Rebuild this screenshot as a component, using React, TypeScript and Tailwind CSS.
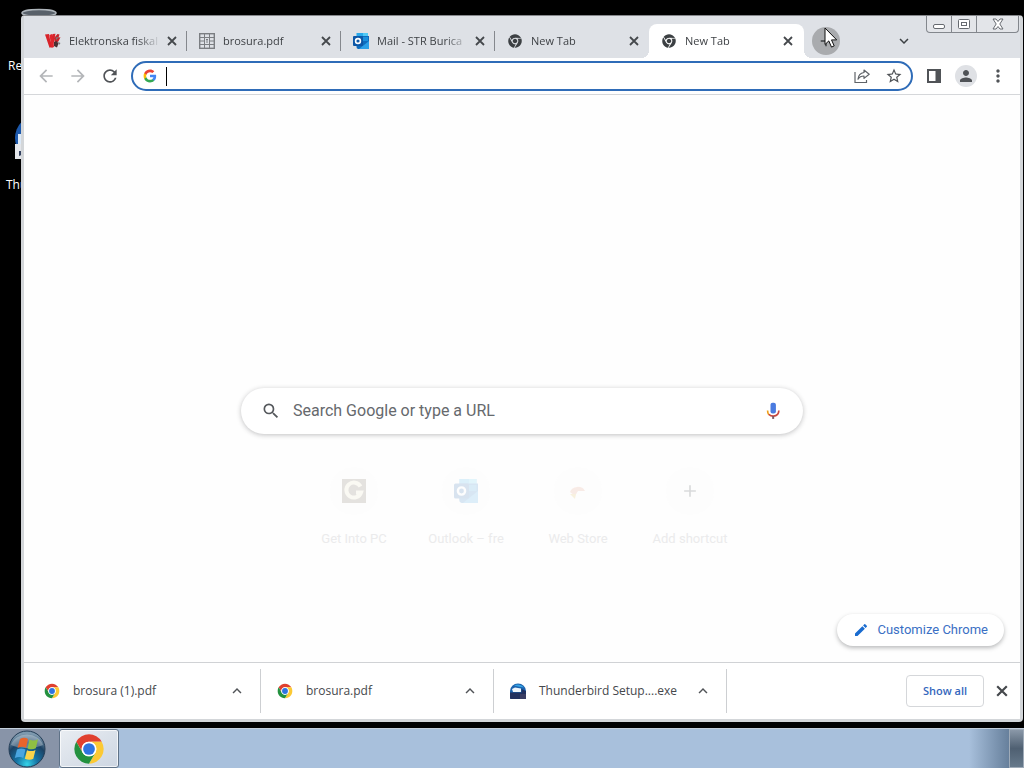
import type { ReactNode } from 'react';
import { FaChrome } from 'react-icons/fa';
import {
  MdAdd,
  MdArrowBack,
  MdArrowForward,
  MdEdit,
  MdExpandLess,
  MdExpandMore,
  MdMoreVert,
  MdPerson,
  MdRefresh,
  MdSearch,
  MdStarBorder,
} from 'react-icons/md';

function ChromeLogo({ className }: { className?: string }) {
  const blade = 'M24 13H43.05A22 22 0 0 0 4.95 13L14.47 29.5A11 11 0 0 1 24 13Z';
  return (
    <svg viewBox="0 0 48 48" className={className} aria-hidden="true">
      <circle cx="24" cy="24" r="21" fill="#fff" />
      <path d={blade} fill="#e0402f" />
      <path d={blade} fill="#fcc934" transform="rotate(120 24 24)" />
      <path d={blade} fill="#23913f" transform="rotate(240 24 24)" />
      <circle cx="24" cy="24" r="11" fill="#fff" />
      <circle cx="24" cy="24" r="8.8" fill="#2f74e0" />
    </svg>
  );
}

function GoogleG() {
  return (
    <svg viewBox="0 0 24 24" className="size-[14px] shrink-0" aria-hidden="true">
      <path fill="#4285F4" d="M22.56 12.25c0-.78-.07-1.53-.2-2.25H12v4.26h5.92c-.26 1.37-1.04 2.53-2.21 3.31v2.77h3.57c2.08-1.92 3.28-4.74 3.28-8.09z" />
      <path fill="#34A853" d="M12 23c2.97 0 5.46-.98 7.28-2.66l-3.57-2.77c-.98.66-2.23 1.06-3.71 1.06-2.86 0-5.29-1.93-6.16-4.53H2.18v2.84C3.99 20.53 7.7 23 12 23z" />
      <path fill="#FBBC05" d="M5.84 14.09c-.22-.66-.35-1.36-.35-2.09s.13-1.43.35-2.09V7.07H2.18C1.43 8.55 1 10.22 1 12s.43 3.45 1.18 4.93l2.85-2.22.81-.62z" />
      <path fill="#EA4335" d="M12 5.38c1.62 0 3.06.56 4.21 1.64l3.15-3.15C17.45 2.09 14.97 1 12 1 7.7 1 3.99 3.47 2.18 7.07l3.66 2.84c.87-2.6 3.3-4.53 6.16-4.53z" />
    </svg>
  );
}

function OutlookLogo({ className }: { className?: string }) {
  return (
    <svg viewBox="0 0 16 16" className={className} aria-hidden="true">
      <path fill="#28a8ea" d="M3.500 0H15v8H3.500z" />
      <path fill="#50c9f5" d="M10 0h5v4h-5z" />
      <path fill="#0f6cbd" d="M3.500 3H16v13H5a2 2 0 0 1-1.500-2z" />
      <path fill="#1a8fdc" d="M10 4h5v4h-5z" />
      <path fill="#2ba0e8" d="M16 8v8H6z" />
      <rect y="3" width="10" height="10" rx="1" fill="#0d57a6" />
      <circle cx="5" cy="8" r="2.400" fill="none" stroke="#fff" strokeWidth="1.600" />
    </svg>
  );
}

function VectorLogo() {
  return (
    <svg viewBox="0 0 16 16" className="size-4" aria-hidden="true">
      <path d="M0 1.500l4-.5 1.500 8L7.500 1l3-.3-2.500 13-3.500 1z" fill="#d8232a" />
      <path d="M4.500 2l2.500-1 2 13-2.500 1z" fill="#e0262d" />
      <path d="M9 5l3.500-4 2 .5-1 3 2-.3-2 4-3.500 3z" fill="#c5252b" />
      <path d="M9 9l2.500-1 2 2.500-1.500 4-3-1.500z" fill="#4a3133" />
      <path d="M10.500 4.500l3-.5-2 3z M13 9l2.500 1-1.500 2z" fill="#777" />
    </svg>
  );
}

function SheetIcon() {
  return (
    <svg viewBox="0 0 16 16" className="size-4" fill="none" stroke="#7b7e82" aria-hidden="true">
      <rect x="0.700" y="0.700" width="14.600" height="14.600" strokeWidth="1.400" />
      <path d="M5.500 1v14M10.500 1v14M1 4.500h14M1 8h4.500M10.500 8H15M1 11.500h14M7 6.500h2M8 6.500v3.500" />
    </svg>
  );
}

function ThunderbirdSetup({ className }: { className?: string }) {
  return (
    <svg viewBox="0 0 16 16" className={className} aria-hidden="true">
      <path d="M0 8a8 7.500 0 0 1 16 0v7a1 1 0 0 1-1 1H1a1 1 0 0 1-1-1z" fill="#1b62ad" />
      <path d="M4 2.500a8 8 0 0 1 10 2l-5-.7z" fill="#35a3e5" />
      <path d="M2 6l3-1.500 6 1V9H3z" fill="#eef5fc" />
      <path d="M0 9.500h11.500V6l4.500 2v7a1 1 0 0 1-1 1H1a1 1 0 0 1-1-1z" fill="#20305f" />
      <path d="M10 11h6v4a1 1 0 0 1-1 1h-5z" fill="#3a3d63" />
    </svg>
  );
}

function ShareIcon() {
  return (
    <svg viewBox="0 0 16 16" className="size-4" fill="none" stroke="#5f6368" strokeWidth="1.200" aria-hidden="true">
      <path d="M1 4v10.500h11.500V12" />
      <path d="M10 2l5.200 4.200-5.200 4.200V8C7 8 5.300 9 4 11.200 4.300 7.500 6.500 5 10 4.500z" strokeLinejoin="round" />
    </svg>
  );
}

function CloseIcon({ className }: { className?: string }) {
  return (
    <svg viewBox="0 0 10 10" className={className} fill="none" stroke="#45484c" strokeWidth="1.800" aria-hidden="true">
      <path d="M1 1l8 8M9 1L1 9" />
    </svg>
  );
}

function MicIcon() {
  return (
    <svg viewBox="0 0 24 24" className="size-5" aria-hidden="true">
      <rect x="9" y="2" width="6.500" height="13" rx="2.500" fill="#4a7be0" />
      <path d="M5.500 11.500c0 2 .6 3.800 1.500 5" stroke="#f0a11c" strokeWidth="2" fill="none" />
      <path d="M7 16c3 2.800 8 2.800 10.500 0 1.200-1.200 1.500-2.800 1.500-4.500" stroke="#c9473f" strokeWidth="2" fill="none" />
      <path d="M12.200 18V21.500" stroke="#7d5a63" strokeWidth="2.400" />
    </svg>
  );
}

function StartOrb() {
  return (
    <svg viewBox="0 0 38 38" className="size-[38px]" aria-hidden="true">
      <defs>
        <radialGradient id="orb" cx="50%" cy="92%" r="85%">
          <stop offset="0" stopColor="#35d3e8" />
          <stop offset="0.350" stopColor="#1673a4" />
          <stop offset="0.700" stopColor="#1b4264" />
          <stop offset="1" stopColor="#7d99ae" />
        </radialGradient>
      </defs>
      <circle cx="19" cy="19" r="18" fill="url(#orb)" stroke="#233c55" />
      <path d="M3 15a16.500 14 0 0 1 32 0c-8 4-24 4-32 0z" fill="#fff" opacity="0.300" />
      <path d="M12 9c3-1.800 5.500-1.500 8 0l-2 9c-2.500-1.500-5-1.600-8.500 0z" fill="#e8642b" />
      <path d="M21.500 9.500c3 1.500 5.500 1.300 8.500-.3l-2.200 9c-2.500 1.500-5.300 1.500-8.300.2z" fill="#8fc043" />
      <path d="M9 19.500c3-1.600 5.900-1.400 8.500.1l-2.200 8.500c-2.500-1.400-5-1.500-8.500 0z" fill="#4aa5df" />
      <path d="M19 20.200c3 1.300 5.700 1.200 8.500-.3l-2.200 8.800c-2.500 1.500-5.300 1.400-8.500 0z" fill="#fbd34a" />
    </svg>
  );
}

function Pointer() {
  return (
    <svg viewBox="0 0 14 22" className="absolute top-0 left-3 h-[22px] w-[14px]" aria-hidden="true">
      <path d="M1 1v16.500l3.800-3.600 2.700 6.200 2.700-1.200-2.700-6h5.200z" fill="#fff" stroke="#111" />
    </svg>
  );
}

const tabs = [
  { title: 'Elektronska fiskal', icon: <VectorLogo /> },
  { title: 'brosura.pdf', icon: <SheetIcon /> },
  { title: 'Mail - STR Burica', icon: <OutlookLogo className="size-4" /> },
  { title: 'New Tab', icon: <FaChrome className="size-[14px] text-[#3c4043]" /> },
  { title: 'New Tab', icon: <FaChrome className="size-[14px] text-[#3c4043]" />, active: true },
];

function Tab({ title, icon, active, divider }: { title: string; icon: ReactNode; active?: boolean; divider: boolean }) {
  return (
    <div
      className={
        active
          ? 'relative flex h-[34px] w-[155px] items-center rounded-t-lg bg-white pl-3'
          : 'relative flex h-[34px] w-[154px] items-center pl-3'
      }
    >
      <span className="flex w-4 shrink-0 justify-center">{icon}</span>
      <span className="ml-2 w-[92px] shrink-0 text-[11px] leading-5 whitespace-nowrap text-[#3f4246] [mask-image:linear-gradient(to_right,black_75%,transparent)]">
        {title}
      </span>
      <button aria-label={`Close ${title}`} className="ml-[3px] flex size-4 items-center justify-center">
        <CloseIcon className="size-[10px]" />
      </button>
      {divider && <span className="absolute right-0 h-5 w-px bg-[#85888d]" />}
      {active && (
        <>
          <span className="absolute bottom-0 -left-2 size-2 bg-[radial-gradient(circle_at_0_0,transparent_8px,white_8px)]" />
          <span className="absolute -right-2 bottom-0 size-2 bg-[radial-gradient(circle_at_100%_0,transparent_8px,white_8px)]" />
        </>
      )}
    </div>
  );
}

function TabStrip() {
  return (
    <header className="flex h-[42px] items-end bg-[#dee1e6] pl-[9px]">
      {tabs.map((tab, i) => (
        <Tab key={i} title={tab.title} icon={tab.icon} active={tab.active} divider={i < 3} />
      ))}
      <button aria-label="New tab" className="relative mb-[3px] ml-2 flex size-7 items-center justify-center rounded-full bg-[#a9abae]">
        <MdAdd className="size-[18px] text-[#3c4043]" />
        <Pointer />
      </button>
      <button aria-label="Search tabs" className="mb-2 ml-auto flex size-[18px] items-center justify-center">
        <MdExpandMore className="size-[18px] text-[#3c4043]" />
      </button>
      <div className="mr-px ml-[13px] flex h-[17px] self-start rounded-b-[4px] border border-t-0 border-[#83878d] bg-[#e3e5e9]">
        <button aria-label="Minimize" className="flex w-[25px] items-center justify-center border-r border-[#83878d]">
          <svg viewBox="0 0 12 12" className="size-3" fill="#fff" stroke="#666a70">
            <rect x="0.500" y="6.500" width="11" height="4" rx="1.500" />
          </svg>
        </button>
        <button aria-label="Maximize" className="flex w-[25px] items-center justify-center border-r border-[#83878d]">
          <svg viewBox="0 0 12 10" className="h-[10px] w-3" fill="#fff" stroke="#666a70">
            <rect x="0.500" y="0.500" width="11" height="9" rx="1" />
            <rect x="3.500" y="3.500" width="5" height="3" />
          </svg>
        </button>
        <button aria-label="Close window" className="flex w-[41px] items-center justify-center">
          <svg viewBox="0 0 12 12" className="size-3" fill="#fff" stroke="#666a70">
            <path d="M1 1h3l2 2.500L8 1h3L7.800 6 11 11H8L6 8.500 4 11H1l3.200-5z" />
          </svg>
        </button>
      </div>
    </header>
  );
}

function Toolbar() {
  return (
    <div className="flex h-[37px] items-center border-b border-[#d5d7da] bg-white px-3">
      <div className="flex gap-3 text-[#b4b6b9]">
        <button aria-label="Back"><MdArrowBack className="size-5" /></button>
        <button aria-label="Forward"><MdArrowForward className="size-5" /></button>
        <button aria-label="Reload"><MdRefresh className="size-5 text-[#505357]" /></button>
      </div>
      <div className="ml-[11px] flex h-[30px] flex-1 items-center rounded-full border-2 border-[#2f6cb8] bg-white pr-2 pl-[10px]">
        <GoogleG />
        <span className="ml-[9px] h-[19px] w-px bg-black" />
        <input aria-label="Address and search bar" className="h-5 min-w-0 flex-1 text-sm outline-none" />
        <button aria-label="Share this page"><ShareIcon /></button>
        <button aria-label="Bookmark this tab" className="ml-[15px]">
          <MdStarBorder className="size-[18px] text-[#505357]" />
        </button>
      </div>
      <div className="ml-[11px] flex items-center gap-3">
        <button aria-label="Side panel" className="flex size-5 items-center justify-center">
          <svg viewBox="0 0 14 14" className="size-[14px]" aria-hidden="true">
            <rect x="1" y="1" width="12" height="12" fill="#fff" stroke="#505357" strokeWidth="2" />
            <path d="M8.500 1H13v12H8.500z" fill="#505357" />
          </svg>
        </button>
        <button aria-label="Profile" className="flex size-5 items-center justify-center rounded-full bg-[#dfe1e5] ring-1 ring-[#dfe1e5]">
          <MdPerson className="size-[18px] text-[#505357]" />
        </button>
        <button aria-label="Menu" className="flex size-5 items-center justify-center">
          <MdMoreVert className="size-5 text-[#505357]" />
        </button>
      </div>
    </div>
  );
}

const shortcuts = [
  {
    label: 'Get Into PC',
    icon: (
      <svg viewBox="0 0 24 24" className="size-6 opacity-25">
        <rect width="24" height="24" fill="#9c958a" />
        <path d="M18.500 7.500a7.500 7.500 0 1 0 .5 6h-5" fill="none" stroke="#f3eed6" strokeWidth="4" />
      </svg>
    ),
  },
  { label: 'Outlook – fre', icon: <OutlookLogo className="size-6 opacity-15" /> },
  {
    label: 'Web Store',
    icon: (
      <svg viewBox="0 0 24 24" className="size-6 opacity-20">
        <path d="M4 13a8 7 0 0 1 15-1h-7l-3 5z" fill="#e9a58f" />
        <path d="M4 15h6l-1 5z" fill="#e6c36d" />
      </svg>
    ),
  },
  { label: 'Add shortcut', icon: <MdAdd className="size-5 text-[#d9dadb]" /> },
];

function NewTabPage() {
  return (
    <main className="flex min-h-0 flex-1 flex-col items-center bg-[#fefefe] pt-[293px]">
      <div className="flex h-[46px] w-[562px] max-w-full shrink-0 items-center rounded-full bg-white px-5 shadow-[0_1px_5px_rgba(32,33,36,0.28)]">
        <MdSearch className="size-5 text-[#55585c]" />
        <input
          aria-label="Search Google"
          placeholder="Search Google or type a URL"
          className="ml-3 min-w-0 flex-1 font-[Roboto,sans-serif] text-base outline-none placeholder:text-[#66696d]"
        />
        <button aria-label="Search by voice"><MicIcon /></button>
      </div>
      <nav className="mt-[33px] flex">
        {shortcuts.map((s) => (
          <a key={s.label} href="#" className="flex w-28 flex-col items-center">
            <span className="flex size-12 items-center justify-center rounded-full bg-[#fdfdfd]">{s.icon}</span>
            <span className="mt-3.5 font-[Roboto,sans-serif] text-[13px] leading-5 text-[#ebebec]">{s.label}</span>
          </a>
        ))}
      </nav>
      <button className="mt-auto mr-4 mb-4 flex h-8 shrink-0 items-center gap-2 self-end rounded-full bg-white px-4 font-[Roboto,sans-serif] text-[13px] text-[#3a6fc4] shadow-[0_2px_4px_rgba(60,64,67,0.35)]">
        <MdEdit className="size-4 text-[#1a6cd0]" />
        Customize Chrome
      </button>
    </main>
  );
}

const downloads = [
  { name: 'brosura (1).pdf', icon: <ChromeLogo className="size-4" /> },
  { name: 'brosura.pdf', icon: <ChromeLogo className="size-4" /> },
  { name: 'Thunderbird Setup....exe', icon: <ThunderbirdSetup className="size-4" /> },
];

function DownloadBar() {
  return (
    <footer className="flex h-[57px] items-center border-t border-[#d0d2d5] bg-white pr-[9px] pl-1">
      {downloads.map((file) => (
        <div key={file.name} className="flex h-[44px] w-[233px] items-center border-r border-[#cdcfd2] pr-[14px] pl-4">
          {file.icon}
          <span className="ml-[13px] flex-1 text-xs whitespace-nowrap text-[#45484c]">{file.name}</span>
          <button aria-label={`Options for ${file.name}`}>
            <MdExpandLess className="size-[18px] text-[#505357]" />
          </button>
        </div>
      ))}
      <button className="ml-auto h-8 w-[78px] rounded-[4px] border border-[#d5d7da] text-[11px] font-semibold text-[#3467bd]">
        Show all
      </button>
      <button aria-label="Close downloads bar" className="ml-[9px] flex size-[18px] items-center justify-center">
        <CloseIcon className="size-3" />
      </button>
    </footer>
  );
}

function Desktop() {
  return (
    <>
      <svg viewBox="0 0 36 10" className="absolute top-2 left-[21px] h-[10px] w-9" aria-hidden="true">
        <ellipse cx="18" cy="5" rx="17" ry="3.500" fill="#59616a" stroke="#aeb5bb" strokeWidth="1.500" />
      </svg>
      <span className="absolute top-[58px] left-2 text-xs text-white">Recycle Bin</span>
      <svg viewBox="0 0 48 48" className="absolute top-[116px] left-[14px] size-12" aria-hidden="true">
        <circle cx="24" cy="22" r="23" fill="#1c58ab" />
        <path d="M4 18h12v10H4z" fill="#dbe9f8" />
        <rect x="1" y="28" width="15" height="15" fill="#e4e6ea" />
        <path d="M5 40v-5h5v-4l5 6-5 5v-4z" fill="#33415f" />
      </svg>
      <span className="absolute top-[177px] left-1.5 text-xs text-white">Thunderbird</span>
    </>
  );
}

function Taskbar() {
  return (
    <nav className="flex h-10 shrink-0 items-stretch border-t border-[#c3cfdc] bg-[#a8c0dc]">
      <button aria-label="Start" className="flex w-[59px] items-center bg-[#8894a8] pl-2">
        <StartOrb />
      </button>
      <button aria-label="Google Chrome" className="flex w-[60px] items-center justify-center rounded-[3px] border border-[#5f7287] bg-linear-to-br from-[#e9edf2] to-[#cdd6e2] inset-ring inset-ring-white/70">
        <ChromeLogo className="size-8" />
      </button>
      <span className="ml-auto w-10 bg-linear-to-r from-[#a8c0dc] to-[#67809c]" />
      <button aria-label="Show desktop" className="w-[15px] border border-[#9fabb8] bg-linear-to-b from-[#8a98a8] via-[#4f6072] to-[#66798b]" />
    </nav>
  );
}

export default function App() {
  return (
    <div className="flex h-screen flex-col overflow-hidden bg-black font-['Open_Sans',sans-serif]">
      <div className="relative flex min-h-0 flex-1 pt-[15px] pr-px pb-1.5 pl-[21px]">
        <Desktop />
        <div className="relative flex min-w-0 flex-1 flex-col overflow-hidden rounded-[4px] border-3 border-t border-[#d3d6d9] border-t-[#85878b] bg-white">
          <TabStrip />
          <Toolbar />
          <NewTabPage />
          <DownloadBar />
        </div>
      </div>
      <Taskbar />
    </div>
  );
}
